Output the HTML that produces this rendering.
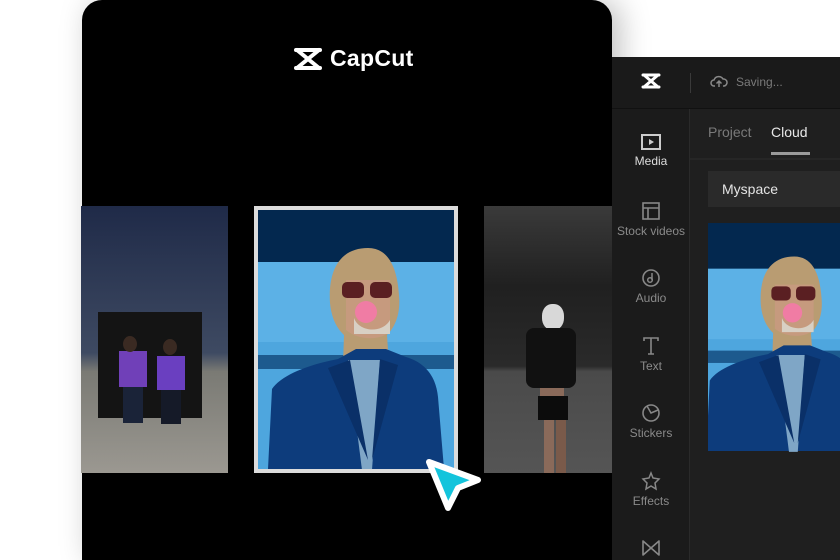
<!DOCTYPE html>
<html style="overflow:hidden;width:840px;height:560px"><head><meta charset="utf-8"><style>
*{margin:0;padding:0;box-sizing:border-box}
body{width:840px;height:560px;background:#fff;position:relative;overflow:hidden;font-family:"Liberation Sans",sans-serif}
.card{position:absolute;left:82px;top:0;width:530px;height:560px;background:#000;border-radius:20px 20px 0 0;box-shadow:8px 0 30px rgba(0,0,0,.25)}
.logo{position:absolute;left:292px;top:45px;display:flex;align-items:center;color:#fff;font-size:23px;font-weight:bold;letter-spacing:0.3px}
.panel{position:absolute;left:612px;top:57px;width:228px;height:503px;background:#1f1f1f}
.top{position:absolute;left:0;top:0;width:228px;height:52px;background:#1a1a1a;border-bottom:1px solid #111}
.side{position:absolute;left:0;top:52px;width:78px;height:451px;background:#1b1b1b;border-right:1px solid #2a2a2a}
.it{position:absolute;left:0;width:78px;text-align:center;color:#8a8a8a;font-size:12px}
.it svg{display:block;margin:0 auto 3px}
.photo{position:absolute;overflow:hidden}
</style></head><body>
<div class="card"></div>
<div class="logo"><svg width="32" height="26" viewBox="0 0 32 26"><path d="M4 4h24M4 22h24M5 4l22 18M27 4L5 22" stroke="#fff" stroke-width="4" fill="none" stroke-linecap="round" stroke-linejoin="round"/></svg><span style="margin-left:6px">CapCut</span></div>

<div class="photo" style="left:81px;top:206px;width:147px;height:267px;background:linear-gradient(#1f2a48,#3e4a62 55%,#7a7a74 62%,#9b9891 100%)">
<div style="position:absolute;left:17px;top:106px;width:104px;height:106px;background:#141414"></div>
<div style="position:absolute;left:38px;top:145px;width:28px;height:36px;background:#7040b8"></div>
<div style="position:absolute;left:76px;top:150px;width:28px;height:34px;background:#6a3fc0"></div>
<div style="position:absolute;left:42px;top:181px;width:20px;height:36px;background:#1a2338"></div>
<div style="position:absolute;left:80px;top:184px;width:20px;height:34px;background:#151a28"></div>
<div style="position:absolute;left:42px;top:130px;width:14px;height:16px;border-radius:50%;background:#3a2a22"></div>
<div style="position:absolute;left:82px;top:133px;width:14px;height:16px;border-radius:50%;background:#3a2a22"></div>
</div>

<div style="position:absolute;left:254px;top:206px;width:204px;height:267px;background:#dcdcdc"></div>
<div class="photo" style="left:258px;top:210px;width:196px;height:259px">
<svg width="196" height="259" viewBox="0 0 196 259"><defs><g id="man">
<rect width="196" height="259" fill="#4ea6de"/><rect width="196" height="52" fill="#03284f"/>
<rect y="52" width="196" height="80" fill="#5cb1e6"/><rect y="145" width="196" height="14" fill="#1d5a8e"/>
<path d="M110 38c-30 0-40 25-38 55 2 20 10 28 14 32l-1 30h46l-2-30c6-6 14-18 12-40-2-30-12-47-31-47z" fill="#b99c72"/>
<path d="M88 70h44v50c-5 10-30 12-44 0z" fill="#c69a7e"/>
<path d="M96 108c5 14 28 16 36 2v14H96z" fill="#d8d0c4"/>
<rect x="84" y="72" width="22" height="16" rx="5" fill="#5a1f22"/><rect x="112" y="72" width="22" height="16" rx="5" fill="#5a1f22"/>
<circle cx="108" cy="102" r="11" fill="#f07ca4"/>
<path d="M10 259l4-80c10-15 40-25 66-30l18-10h30l20 8c20 6 30 20 32 40l6 72z" fill="#0d3c7c"/>
<path d="M90 150l32 0-8 110h-10z" fill="#7fa6c6"/>
<path d="M70 158l22 -8 18 100z M140 155l-18 -6-8 101z" fill="#0a3068"/>
</g></defs><use href="#man"/></svg>
</div>

<div class="photo" style="left:484px;top:206px;width:128px;height:267px;background:linear-gradient(#3a3a3a,#202020 30%,#2a2a2a 60%,#4a4a4a 62%,#555 100%)">
<div style="position:absolute;left:58px;top:98px;width:22px;height:26px;border-radius:45%;background:#d8d8d8"></div>
<div style="position:absolute;left:42px;top:122px;width:50px;height:60px;border-radius:8px;background:#111"></div>
<div style="position:absolute;left:56px;top:182px;width:24px;height:10px;background:#8a6a5a"></div>
<div style="position:absolute;left:54px;top:190px;width:30px;height:24px;background:#0c0c0c"></div>
<div style="position:absolute;left:60px;top:214px;width:10px;height:53px;background:#8a6a5a"></div>
<div style="position:absolute;left:72px;top:214px;width:10px;height:53px;background:#7a5a4a"></div>
</div>

<svg style="position:absolute;left:420px;top:448px" width="70" height="70" viewBox="0 0 70 70">
<path d="M9 14L28 60 38 40 58 32z" fill="#13c4dc" stroke="#fff" stroke-width="6" stroke-linejoin="round"/></svg>

<div class="panel">
<div class="top">
<svg style="position:absolute;left:28px;top:15px" width="22" height="18" viewBox="0 0 22 18"><path d="M3 3h16M3 15h16M4 3l14 12M18 3L4 15" stroke="#fff" stroke-width="3" fill="none" stroke-linecap="round"/></svg>
<div style="position:absolute;left:78px;top:16px;width:1px;height:20px;background:#3a3a3a"></div>
<svg style="position:absolute;left:98px;top:18px" width="18" height="14" viewBox="0 0 18 14"><path d="M5 11H4a3 3 0 010-6 5 5 0 019-1 3.5 3.5 0 011 7h-1M9 12V6M6.5 8.5L9 6l2.5 2.5" stroke="#888" stroke-width="1.5" fill="none"/></svg>
<div style="position:absolute;left:124px;top:18px;color:#7a7a7a;font-size:12px">Saving...</div>
</div>
<div class="side">
<div class="it" style="top:24px;color:#ddd"><svg width="22" height="18" viewBox="0 0 22 18"><rect x="2" y="2" width="18" height="14" stroke="#ccc" stroke-width="2" fill="none"/><path d="M9 6l5 3-5 3z" fill="#ccc"/></svg>Media</div>
<div class="it" style="top:92px"><svg width="20" height="20" viewBox="0 0 20 20"><rect x="2" y="2" width="16" height="16" stroke="#888" stroke-width="1.6" fill="none"/><path d="M2 7h16M7 7v11" stroke="#888" stroke-width="1.6"/></svg>Stock videos</div>
<div class="it" style="top:159px"><svg width="20" height="20" viewBox="0 0 20 20"><circle cx="10" cy="10" r="8" stroke="#888" stroke-width="1.6" fill="none"/><circle cx="9" cy="12" r="2.3" stroke="#888" stroke-width="1.5" fill="none"/><path d="M11 12V5" stroke="#888" stroke-width="1.5"/></svg>Audio</div>
<div class="it" style="top:227px"><svg width="20" height="20" viewBox="0 0 20 20"><path d="M3 5V2h14v3M10 2v16M7 18h6" stroke="#888" stroke-width="1.6" fill="none"/></svg>Text</div>
<div class="it" style="top:294px"><svg width="20" height="20" viewBox="0 0 20 20"><circle cx="10" cy="10" r="8" stroke="#888" stroke-width="1.6" fill="none"/><path d="M6 3l4 7 7-3" stroke="#888" stroke-width="1.5" fill="none"/></svg>Stickers</div>
<div class="it" style="top:362px"><svg width="20" height="20" viewBox="0 0 20 20"><path d="M10 2l2 5 6 1-4 4 1 6-5-3-5 3 1-6-4-4 6-1z" stroke="#888" stroke-width="1.5" fill="none"/></svg>Effects</div>
<div class="it" style="top:430px"><svg width="20" height="18" viewBox="0 0 20 18"><path d="M2 2v14l16-14v14z" stroke="#888" stroke-width="1.6" fill="none" stroke-linejoin="round"/></svg></div>
</div>
<div style="position:absolute;left:96px;top:67px;color:#7a7a7a;font-size:14px">Project</div>
<div style="position:absolute;left:159px;top:67px;color:#e8e8e8;font-size:14px">Cloud</div>
<div style="position:absolute;left:159px;top:95px;width:39px;height:3px;background:#9a9a9a"></div>
<div style="position:absolute;left:78px;top:101px;width:150px;height:2px;background:#262626"></div>
<div style="position:absolute;left:96px;top:114px;width:132px;height:36px;background:#2a2a2a"></div>
<div style="position:absolute;left:110px;top:124px;color:#e4e4e4;font-size:14px">Myspace</div>
<div class="photo" style="left:96px;top:166px;width:132px;height:235px">
<svg width="132" height="235" viewBox="12 0 150 267" preserveAspectRatio="xMinYMin slice"><use href="#man"/></svg>
</div>
</div>
</body></html>
